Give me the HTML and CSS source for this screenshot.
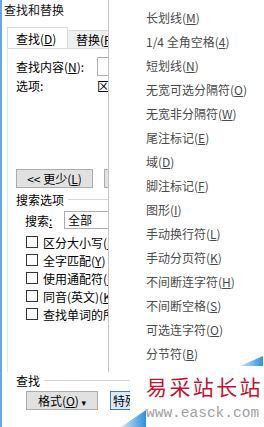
FILE: index.html
```html
<!DOCTYPE html>
<html lang="zh-CN">
<head>
    <meta charset="UTF-8">
    <meta name="viewport" content="width=device-width, initial-scale=1.0">
    <title>查找和替换</title>
    <link rel="stylesheet" href="styles.css">
</head>
<body>
    <div class="window">
        <div class="title">查找和替换</div>
        <div class="tabs">
            <div class="tab active">查找(<u>D</u>)</div>
            <div class="tab">替换(<u>P</u>)</div>
        </div>
        <div class="page">
            <div class="row find-row">
                <span class="lbl">查找内容(<u>N</u>):</span>
                <span class="input"></span>
            </div>
            <div class="row opt-row">
                <span class="lbl">选项:</span>
                <span class="opt">区分全/半角</span>
            </div>
            <div class="btn-row">
                <div class="btn less">&lt;&lt; 更少(<u>L</u>)</div>
                <div class="btn">阅读突出显示</div>
            </div>
            <div class="group">
                <span>搜索选项</span>
                <span class="rule"></span>
            </div>
            <div class="search-row">
                <span class="lbl">搜索<u>:</u></span>
                <span class="select">全部</span>
            </div>
            <div class="check"><span class="box"></span>区分大小写(<u>H</u>)</div>
            <div class="check"><span class="box"></span>全字匹配(<u>Y</u>)</div>
            <div class="check"><span class="box"></span>使用通配符(<u>U</u>)</div>
            <div class="check"><span class="box"></span>同音(英文)(<u>K</u>)</div>
            <div class="check"><span class="box"></span>查找单词的所有形式(英文)(<u>W</u>)</div>
        </div>
        <div class="group outer-group">
            <span>查找</span>
            <span class="rule"></span>
        </div>
        <div class="bottom-row">
            <div class="btn format">格式(<u>O</u>) <span class="caret">▾</span></div>
            <div class="btn special">特殊格式(<u>E</u>)</div>
        </div>
    </div>

    <div class="menu">
        <div class="item">长划线(<u>M</u>)</div>
        <div class="item">1/4 全角空格(<u>4</u>)</div>
        <div class="item">短划线(<u>N</u>)</div>
        <div class="item">无宽可选分隔符(<u>O</u>)</div>
        <div class="item">无宽非分隔符(<u>W</u>)</div>
        <div class="item">尾注标记(<u>E</u>)</div>
        <div class="item">域(<u>D</u>)</div>
        <div class="item">脚注标记(<u>F</u>)</div>
        <div class="item">图形(<u>I</u>)</div>
        <div class="item">手动换行符(<u>L</u>)</div>
        <div class="item">手动分页符(<u>K</u>)</div>
        <div class="item">不间断连字符(<u>H</u>)</div>
        <div class="item">不间断空格(<u>S</u>)</div>
        <div class="item">可选连字符(<u>O</u>)</div>
        <div class="item">分节符(<u>B</u>)</div>
    </div>

    <div class="mark">
        <div class="mark-cn">易采站长站</div>
        <div class="mark-url">www.easck.com</div>
    </div>

    <svg class="corners" width="264" height="427" viewBox="0 0 264 427">
        <defs>
            <linearGradient id="blue" x1="0" y1="0" x2="1" y2="0">
                <stop offset="0" stop-color="#cfe6f7"/>
                <stop offset="1" stop-color="#2f90d8"/>
            </linearGradient>
        </defs>
        <polygon points="240,366 263,356 263,366" fill="url(#blue)"/>
        <polygon points="121,427 146,410 146,427" fill="url(#blue)"/>
    </svg>
</body>
</html>
```

FILE: styles.css
```css
body {
    margin: 0;
    width: 264px;
    height: 427px;
    overflow: hidden;
    position: relative;
    background-color: #fff;
    font-family: "Noto Sans CJK SC", "DejaVu Sans", sans-serif;
    font-size: 12px;
    color: #000;
}
u {
    text-decoration: underline;
}
.window {
    display: flex;
    flex-direction: column;
    width: 130px;
    height: 427px;
    box-sizing: border-box;
    border-left: 2px solid #6ba7da;
    background-color: #fff;
    overflow: hidden;
}
.title {
    flex: none;
    height: 28px;
    line-height: 20px;
    padding-left: 2px;
    color: #111;
    white-space: nowrap;
}
.tabs {
    flex: none;
    display: flex;
    align-items: flex-end;
    height: 20px;
    margin-left: 5px;
}
.tab {
    height: 17px;
    line-height: 17px;
    padding: 0 8px;
    border: 1px solid #d9d9d9;
    border-bottom: none;
    border-left: none;
    background-color: #f0f0f0;
    white-space: nowrap;
}
.tab.active {
    height: 20px;
    line-height: 22px;
    border-left: 1px solid #d9d9d9;
    background-color: #fff;
    width: 43px;
}
.page {
    flex: 1;
    margin-left: 5px;
    width: 250px;
    box-sizing: border-box;
    padding-left: 8px;
    border-top: 1px solid #d9d9d9;
    border-left: 1px solid #e6e6e6;
    overflow: hidden;
}
.row {
    display: flex;
    align-items: center;
    white-space: nowrap;
}
.find-row {
    margin-top: 8px;
    height: 19px;
}
.find-row .lbl,
.opt-row .lbl {
    width: 81px;
}
.input {
    width: 150px;
    height: 17px;
    border: 1px solid #adadad;
}
.opt-row {
    height: 18px;
}
.btn-row {
    display: flex;
    margin-top: 75px;
    white-space: nowrap;
}
.btn {
    flex: none;
    height: 17px;
    line-height: 17px;
    border: 1px solid #adadad;
    background-color: #e1e1e1;
    text-align: center;
    white-space: nowrap;
}
.less {
    width: 75px;
}
.btn-row .btn + .btn {
    margin-left: 11px;
    width: 90px;
}
.group {
    display: flex;
    align-items: center;
    height: 16px;
    margin-top: 3px;
    white-space: nowrap;
}
.group .rule {
    flex: 1;
    margin-left: 4px;
    border-top: 1px solid #d5d5d5;
}
.search-row {
    display: flex;
    align-items: center;
    margin-top: 4px;
    padding-left: 9px;
    height: 18px;
    white-space: nowrap;
}
.search-row .lbl {
    width: 39px;
}
.select {
    flex: none;
    width: 140px;
    height: 16px;
    line-height: 16px;
    padding-left: 3px;
    border: 1px solid #abadb3;
}
.check {
    display: flex;
    align-items: center;
    height: 18px;
    padding-left: 10px;
    white-space: nowrap;
}
.search-row + .check {
    margin-top: 4px;
}
.box {
    flex: none;
    width: 10px;
    height: 10px;
    border: 1px solid #333;
    margin-right: 5px;
    background-color: #fff;
}
.outer-group {
    flex: none;
    margin-top: 0;
    padding-left: 14px;
    width: 240px;
}
.bottom-row {
    flex: none;
    display: flex;
    margin-top: 3px;
    margin-bottom: 17px;
    padding-left: 24px;
}
.format {
    width: 70px;
}
.caret {
    font-size: 9px;
}
.special {
    margin-left: 12px;
    width: 80px;
    border-color: #3c7fb1;
    background-color: #dceaf7;
    text-align: left;
    padding-left: 2px;
}
.menu {
    position: absolute;
    left: 108px;
    top: 0;
    width: 156px;
    height: 372px;
    box-sizing: border-box;
    padding-top: 6px;
    border-left: 1px solid #c6c6c6;
    background-color: #fff;
}
.item {
    height: 24px;
    line-height: 24px;
    padding-left: 37px;
    color: #4a4a4a;
    white-space: nowrap;
}
.mark {
    position: absolute;
    left: 130px;
    top: 372px;
    width: 134px;
    height: 55px;
    box-sizing: border-box;
    padding-left: 16px;
    background-color: #fff;
}
.mark-cn {
    height: 30px;
    line-height: 28px;
    font-size: 21px;
    letter-spacing: 2.4px;
    color: #c41230;
    white-space: nowrap;
}
.mark-url {
    margin-top: 4px;
    line-height: 14px;
    font-family: "Liberation Mono", monospace;
    font-size: 14.5px;
    color: #a0a0a0;
    white-space: nowrap;
}
.corners {
    position: absolute;
    left: 0;
    top: 0;
    pointer-events: none;
}
```
